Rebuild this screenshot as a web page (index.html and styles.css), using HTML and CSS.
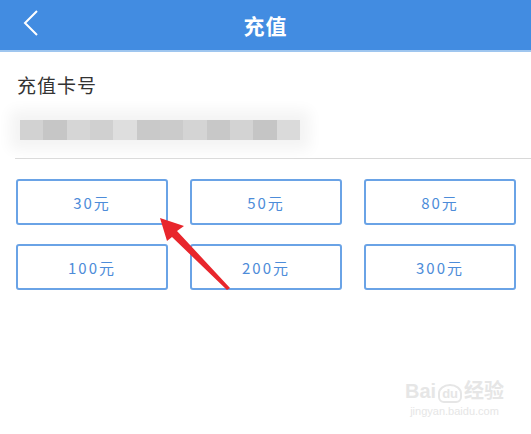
FILE: index.html
```html
<!DOCTYPE html>
<html lang="zh-CN">
<head>
  <meta charset="UTF-8">
  <title>充值</title>
  <link rel="stylesheet" href="styles.css">
</head>
<body>

  <div class="header">
    <span class="back">
      <svg width="16" height="26" viewBox="0 0 16 26"><path d="M14 1 L2 13 L14 25" fill="none" stroke="#fff" stroke-width="2"/></svg>
    </span>
    <h1>充值</h1>
  </div>

  <div class="card-info">
    <div class="label">充值卡号</div>
    <div class="card-no">
      <i style="background:#d2d2d2"></i><i style="background:#c6c6c6"></i><i style="background:#d6d6d6"></i><i style="background:#d0d0d0"></i><i style="background:#dedede"></i><i style="background:#c9c9c9"></i><i style="background:#cbcbcb"></i><i style="background:#d4d4d4"></i><i style="background:#c8c8c8"></i><i style="background:#d3d3d3"></i><i style="background:#c5c5c5"></i><i style="background:#dadada"></i>
    </div>
  </div>

  <div class="amounts">
    <button class="amount">30元</button>
    <button class="amount">50元</button>
    <button class="amount">80元</button>
    <button class="amount">100元</button>
    <button class="amount">200元</button>
    <button class="amount">300元</button>
  </div>

  <!-- 指示箭头 -->
  <svg class="arrow" width="80" height="80" viewBox="0 0 80 80">
    <path d="M2 2 L26 10 L19 15 L72 72 L69 74 L14 21 L9 25 Z" fill="#e8262c"/>
  </svg>

  <div class="watermark">
    <div class="wm-logo">Bai<span class="wm-du">du</span>经验</div>
    <div class="wm-url">jingyan.baidu.com</div>
  </div>

</body>
</html>
```

FILE: styles.css
```css
html, body {
  margin: 0;
  padding: 0;
  height: 100%;
  background: #fff;
  font-family: "Noto Sans CJK SC", "Liberation Sans", sans-serif;
  overflow: hidden;
  position: relative;
}

.header {
  height: 50px;
  background-color: #428ce1;
  border-bottom: 2px solid #9fc6ef;
  display: flex;
  align-items: center;
  justify-content: center;
  position: relative;
}

.header h1 {
  margin: 0;
  color: #fff;
  font-size: 21px;
  font-weight: bold;
  letter-spacing: 1px;
}

.back {
  position: absolute;
  left: 23px;
  top: 10px;
}

.card-info {
  margin-left: 15px;
  padding: 20px 0 18px 2px;
  border-bottom: 1px solid #d8d8d8;
}

.label {
  font-size: 19px;
  color: #333;
  line-height: 26px;
  letter-spacing: 1px;
}

.card-no {
  display: flex;
  margin-top: 22px;
  margin-left: 3px;
  height: 20px;
  width: 280px;
  box-shadow: 0 0 14px 10px #f4f4f4;
}

.card-no i {
  flex: 1;
}

.amounts {
  display: grid;
  grid-template-columns: repeat(3, 1fr);
  column-gap: 22px;
  row-gap: 19px;
  padding: 20px 15px 0 16px;
}

.amount {
  height: 46px;
  background: #fff;
  border: 2px solid #6aa3e6;
  border-radius: 3px;
  color: #4d8cd9;
  font-family: "Noto Sans CJK SC", "Liberation Sans", sans-serif;
  font-size: 15px;
  letter-spacing: 2px;
  padding: 0;
}

.arrow {
  position: absolute;
  left: 158px;
  top: 216px;
}

.watermark {
  position: absolute;
  left: 405px;
  top: 380px;
  color: #e6e6e6;
  text-align: center;
}

.wm-logo {
  font-size: 20px;
  font-weight: bold;
  line-height: 22px;
  font-family: "Liberation Sans", "Noto Sans CJK SC", sans-serif;
}

.wm-du {
  display: inline-block;
  border: 2px solid #e6e6e6;
  border-radius: 50% 50% 6px 6px;
  font-size: 13px;
  line-height: 15px;
  padding: 0 2px;
  margin: 0 2px;
}

.wm-url {
  font-size: 11px;
  line-height: 16px;
  font-family: "Liberation Sans", sans-serif;
}
```
